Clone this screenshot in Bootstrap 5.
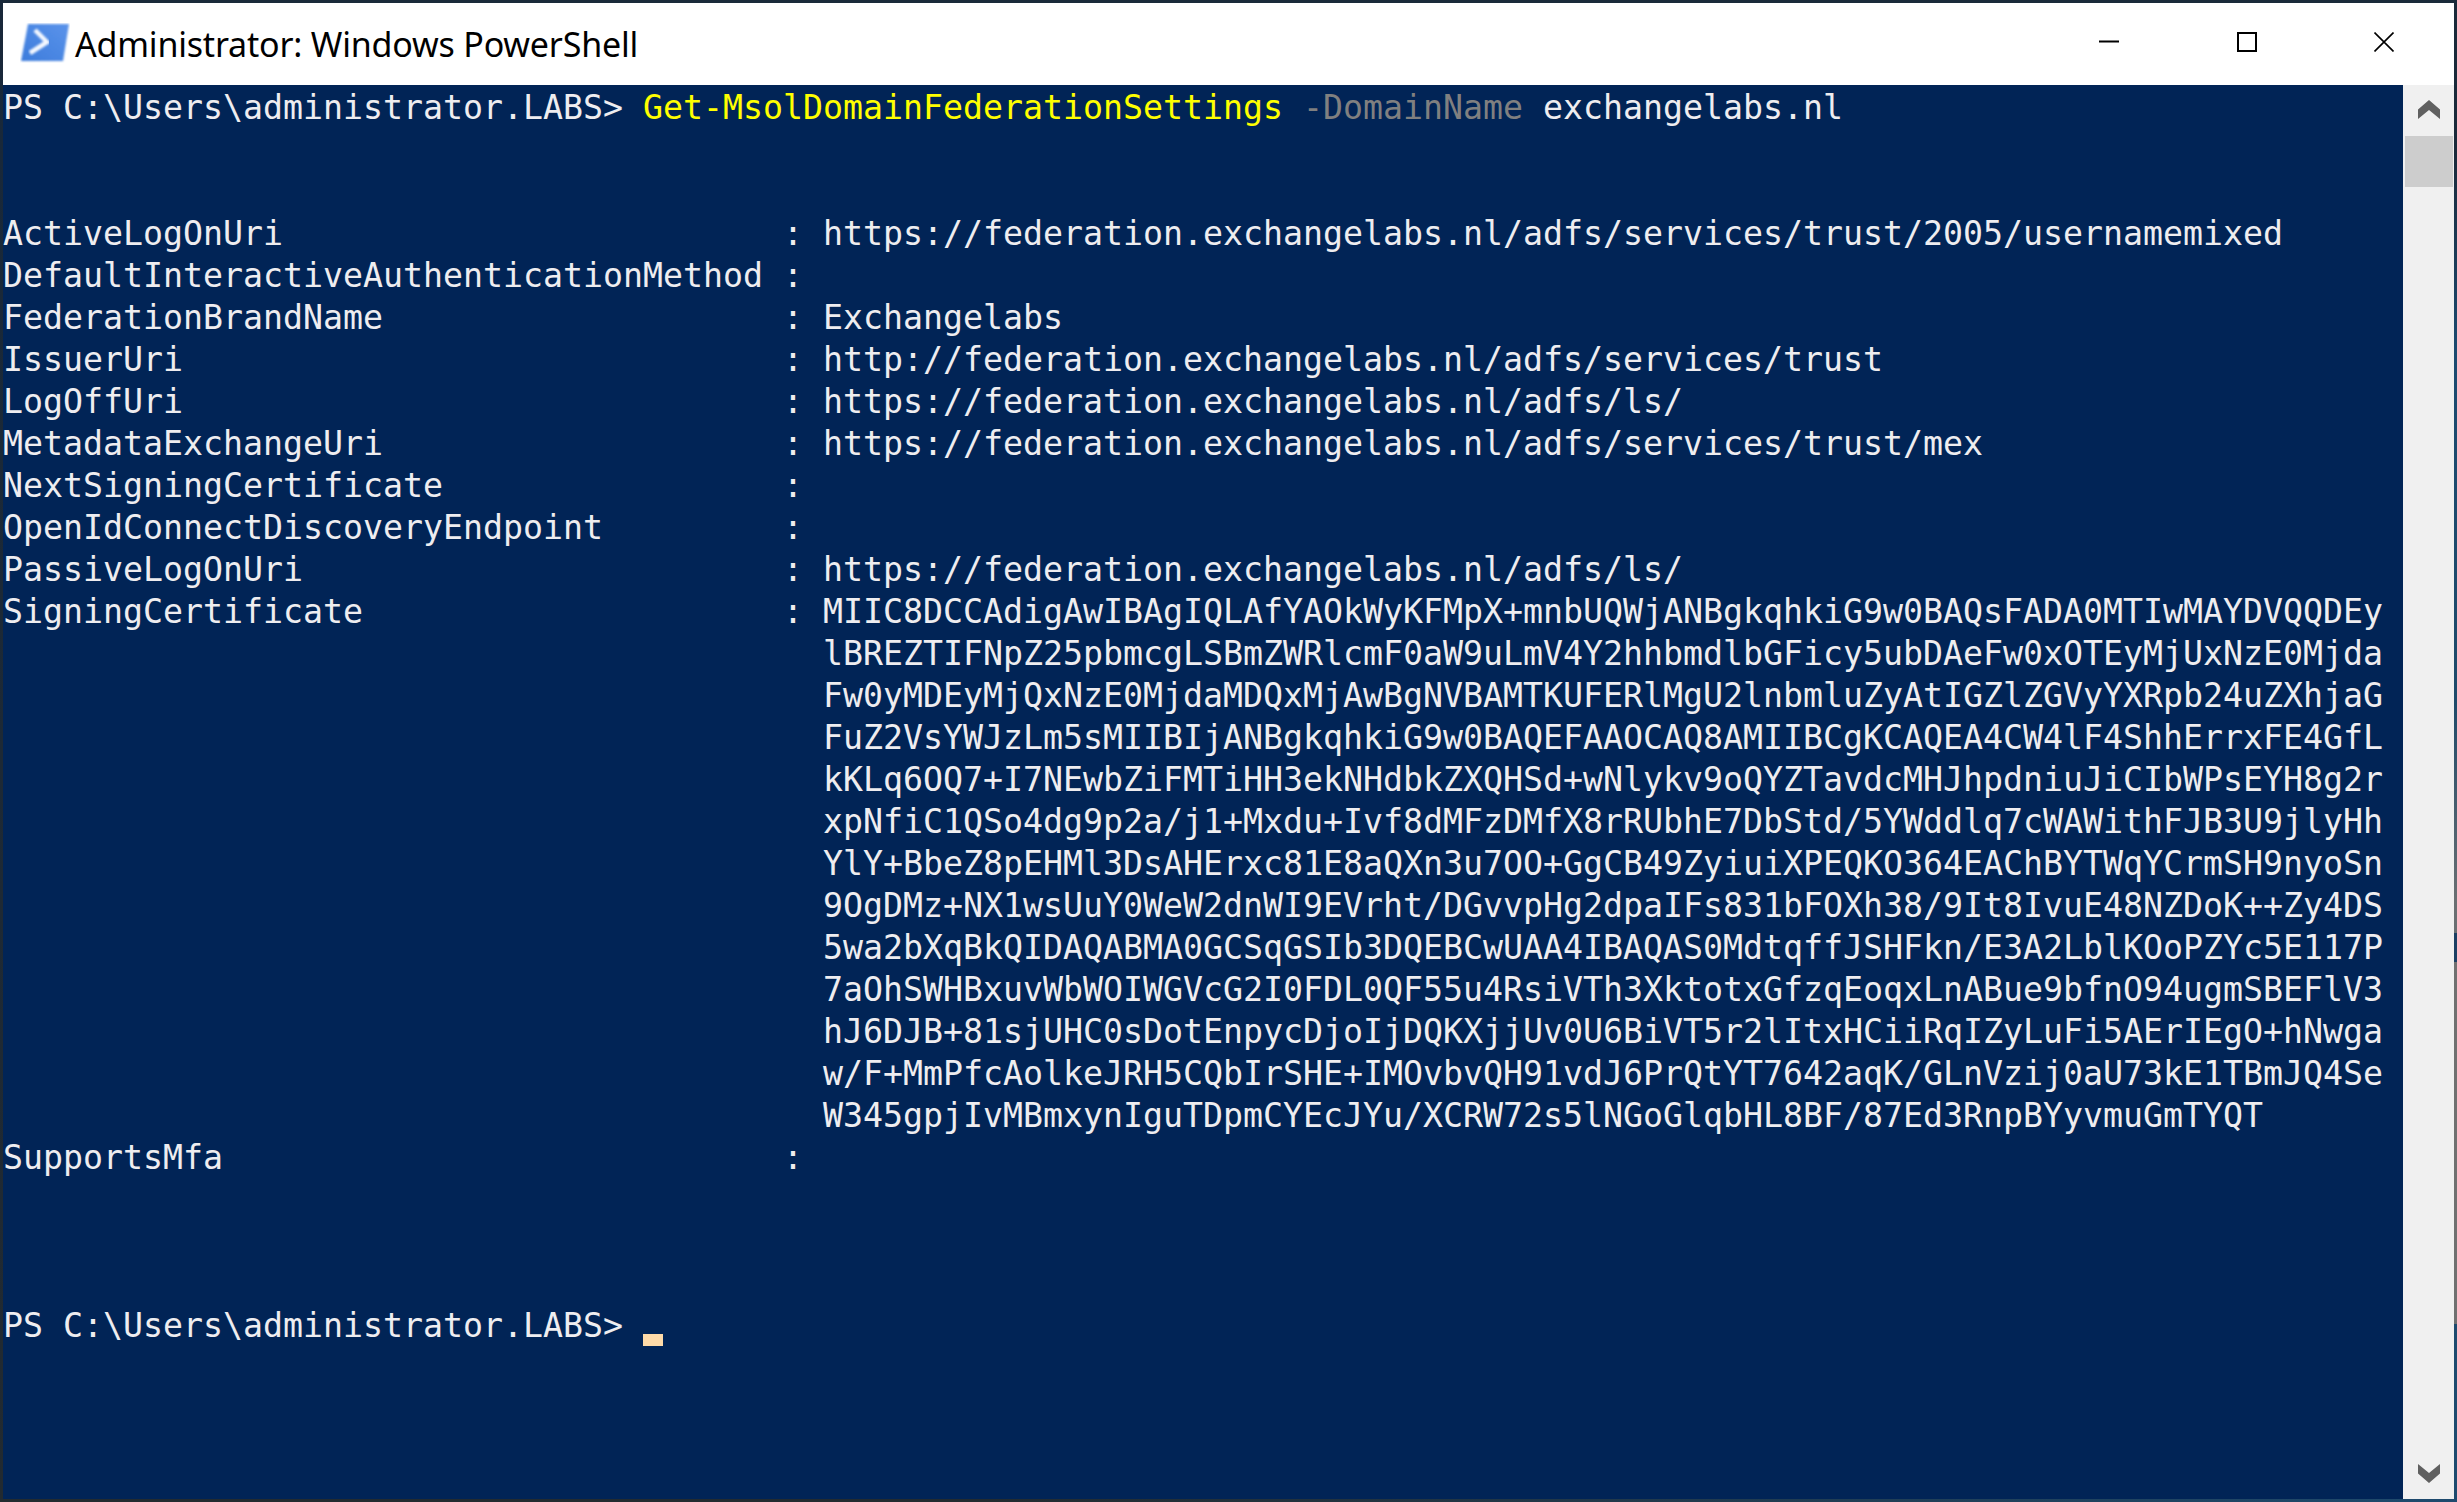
<!DOCTYPE html>
<html lang="en">
<head>
<meta charset="utf-8">
<title>Administrator: Windows PowerShell</title>
<link rel="stylesheet" href="https://cdn.jsdelivr.net/npm/bootstrap@5.3.0/dist/css/bootstrap.min.css">
<style>
html, body { height: 100%; margin: 0; background: #1b2b3c; overflow: hidden; }
.ps-window {
  height: 1502px; padding: 3px;
  background:
    linear-gradient(to right, #232b30 0, #232b30 40%, #1e4a6e 100%) bottom / 100% 3px no-repeat,
    linear-gradient(to bottom, #1a2a3a 0, #1a2a3a 150px, #1c4a70 350px, #1e4a6a 700px, #6a6f72 900px, #6a6f72 933px, #1b3f63 933px, #1b3f63 962px, #707070 962px, #707070 1324px, #1d4a6e 1324px, #1d4a6e 100%) right / 3px 100% no-repeat,
    linear-gradient(to bottom, #18283a, #222a30) left / 3px 100% no-repeat,
    #1a2a3a;
}
.ps-title { height: 82px; background: #fff; color: #000; flex: none; }
.ps-title-text { font-family: "Noto Sans", sans-serif; font-size: 34px; line-height: 1; letter-spacing: -.2px; margin-left: 5px; margin-bottom: 1px; white-space: nowrap; }
.ps-icon { width: 50px; height: 40px; margin-left: 17px; margin-bottom: 2px; flex: none; }
.ps-ctrl { width: 20px; height: 20px; display: block; flex: none; }
.ps-ctrl-wrap { gap: 117.5px; padding-right: 60px; }
.ps-body { min-height: 0; }
.ps-console { background: #012456; color: #eeedf0; width: 2400px; flex: none; padding-top: 2px; font-family: "DejaVu Sans Mono", monospace; font-size: 33.23px; line-height: 42px; overflow: hidden; }
.ps-line, .ps-props > div { white-space: pre; }
.ps-props { display: grid; grid-template-columns: 39ch 2ch 1fr; margin-top: 84px; }
.ps-props > div { min-height: 42px; }
.ps-prompt-last { margin-top: 126px; }
.ps-cmd { color: #ffff00; }
.ps-param { color: #808080; }
.ps-cursor { display: inline-block; width: 20px; height: 12px; background: #fedba9; vertical-align: -9px; }
.ps-scroll { background: #f0f0f0; }
.ps-thumb { height: 51px; background: #cdcdcd; margin: 0 1px 0 2px; }
.ps-arrow { width: 22px; display: block; flex: none; }
.ps-arrow-up { height: 19px; margin: 15px auto 17px; }
.ps-arrow-down { height: 19px; margin: 0 auto 16px; }
</style>
</head>
<body>
<div class="ps-window d-flex flex-column">
  <div class="ps-title d-flex align-items-center">
    <svg class="ps-icon" viewBox="0 0 50 40" aria-hidden="true">
      <defs>
        <linearGradient id="g" x1="0" y1="1" x2="1" y2="0"><stop offset="0" stop-color="#3d7cdc"/><stop offset="1" stop-color="#5a93ea"/></linearGradient>
        <filter id="b" x="-10%" y="-10%" width="120%" height="120%"><feGaussianBlur stdDeviation=".8"/></filter>
      </defs>
      <path d="M8 1H49L43 38H1Z" fill="url(#g)" filter="url(#b)"/>
      <path d="M15 7 27 19 10 30" fill="none" stroke="#f4f8ff" stroke-width="4.5" filter="url(#b)"/>
      <path d="M25 30H38" fill="none" stroke="#f4f8ff" stroke-width="3.5" filter="url(#b)"/>
    </svg>
    <div class="ps-title-text">Administrator: Windows PowerShell</div>
    <div class="ms-auto mb-1 d-flex align-items-center ps-ctrl-wrap">
      <svg class="ps-ctrl" viewBox="0 0 20 20" aria-hidden="true"><path d="M0 9.5H20" stroke="#000" stroke-width="2"/></svg>
      <svg class="ps-ctrl" viewBox="0 0 20 20" aria-hidden="true"><rect x="1" y="1" width="18" height="18" fill="none" stroke="#000" stroke-width="2"/></svg>
      <svg class="ps-ctrl" viewBox="0 0 20 20" aria-hidden="true"><path d="M.5.5 19.5 19.5M19.5.5.5 19.5" stroke="#000" stroke-width="1.6"/></svg>
    </div>
  </div>
  <div class="ps-body d-flex flex-grow-1">
    <div class="ps-console">
      <div class="ps-line d-flex"><span>PS C:\Users\administrator.LABS&gt; </span><span class="ps-cmd">Get-MsolDomainFederationSettings </span><span class="ps-param">-DomainName </span><span>exchangelabs.nl</span></div>
      <div class="ps-props">
        <div>ActiveLogOnUri</div><div>:</div><div>https://federation.exchangelabs.nl/adfs/services/trust/2005/usernamemixed</div>
        <div>DefaultInteractiveAuthenticationMethod</div><div>:</div><div></div>
        <div>FederationBrandName</div><div>:</div><div>Exchangelabs</div>
        <div>IssuerUri</div><div>:</div><div>http://federation.exchangelabs.nl/adfs/services/trust</div>
        <div>LogOffUri</div><div>:</div><div>https://federation.exchangelabs.nl/adfs/ls/</div>
        <div>MetadataExchangeUri</div><div>:</div><div>https://federation.exchangelabs.nl/adfs/services/trust/mex</div>
        <div>NextSigningCertificate</div><div>:</div><div></div>
        <div>OpenIdConnectDiscoveryEndpoint</div><div>:</div><div></div>
        <div>PassiveLogOnUri</div><div>:</div><div>https://federation.exchangelabs.nl/adfs/ls/</div>
        <div>SigningCertificate</div><div>:</div><div>MIIC8DCCAdigAwIBAgIQLAfYAOkWyKFMpX+mnbUQWjANBgkqhkiG9w0BAQsFADA0MTIwMAYDVQQDEy
lBREZTIFNpZ25pbmcgLSBmZWRlcmF0aW9uLmV4Y2hhbmdlbGFicy5ubDAeFw0xOTEyMjUxNzE0Mjda
Fw0yMDEyMjQxNzE0MjdaMDQxMjAwBgNVBAMTKUFERlMgU2lnbmluZyAtIGZlZGVyYXRpb24uZXhjaG
FuZ2VsYWJzLm5sMIIBIjANBgkqhkiG9w0BAQEFAAOCAQ8AMIIBCgKCAQEA4CW4lF4ShhErrxFE4GfL
kKLq6OQ7+I7NEwbZiFMTiHH3ekNHdbkZXQHSd+wNlykv9oQYZTavdcMHJhpdniuJiCIbWPsEYH8g2r
xpNfiC1QSo4dg9p2a/j1+Mxdu+Ivf8dMFzDMfX8rRUbhE7DbStd/5YWddlq7cWAWithFJB3U9jlyHh
YlY+BbeZ8pEHMl3DsAHErxc81E8aQXn3u7OO+GgCB49ZyiuiXPEQKO364EAChBYTWqYCrmSH9nyoSn
9OgDMz+NX1wsUuY0WeW2dnWI9EVrht/DGvvpHg2dpaIFs831bFOXh38/9It8IvuE48NZDoK++Zy4DS
5wa2bXqBkQIDAQABMA0GCSqGSIb3DQEBCwUAA4IBAQAS0MdtqffJSHFkn/E3A2LblKOoPZYc5E117P
7aOhSWHBxuvWbWOIWGVcG2I0FDL0QF55u4RsiVTh3XktotxGfzqEoqxLnABue9bfnO94ugmSBEFlV3
hJ6DJB+81sjUHC0sDotEnpycDjoIjDQKXjjUv0U6BiVT5r2lItxHCiiRqIZyLuFi5AErIEgO+hNwga
w/F+MmPfcAolkeJRH5CQbIrSHE+IMOvbvQH91vdJ6PrQtYT7642aqK/GLnVzij0aU73kE1TBmJQ4Se
W345gpjIvMBmxynIguTDpmCYEcJYu/XCRW72s5lNGoGlqbHL8BF/87Ed3RnpBYyvmuGmTYQT</div>
        <div>SupportsMfa</div><div>:</div><div></div>
      </div>
      <div class="ps-line ps-prompt-last">PS C:\Users\administrator.LABS&gt; <span class="ps-cursor"></span></div>
    </div>
    <div class="ps-scroll flex-grow-1 d-flex flex-column">
      <svg class="ps-arrow ps-arrow-up" viewBox="0 0 22 19" aria-hidden="true"><path d="M11 0 22 9.5V19L11 10 0 19V9.5Z" fill="#606060"/></svg>
      <div class="ps-thumb"></div>
      <svg class="ps-arrow ps-arrow-down mt-auto" viewBox="0 0 22 19" aria-hidden="true"><path d="M11 19 22 9.5V0L11 9 0 0V9.5Z" fill="#606060"/></svg>
    </div>
  </div>
</div>
</body>
</html>
